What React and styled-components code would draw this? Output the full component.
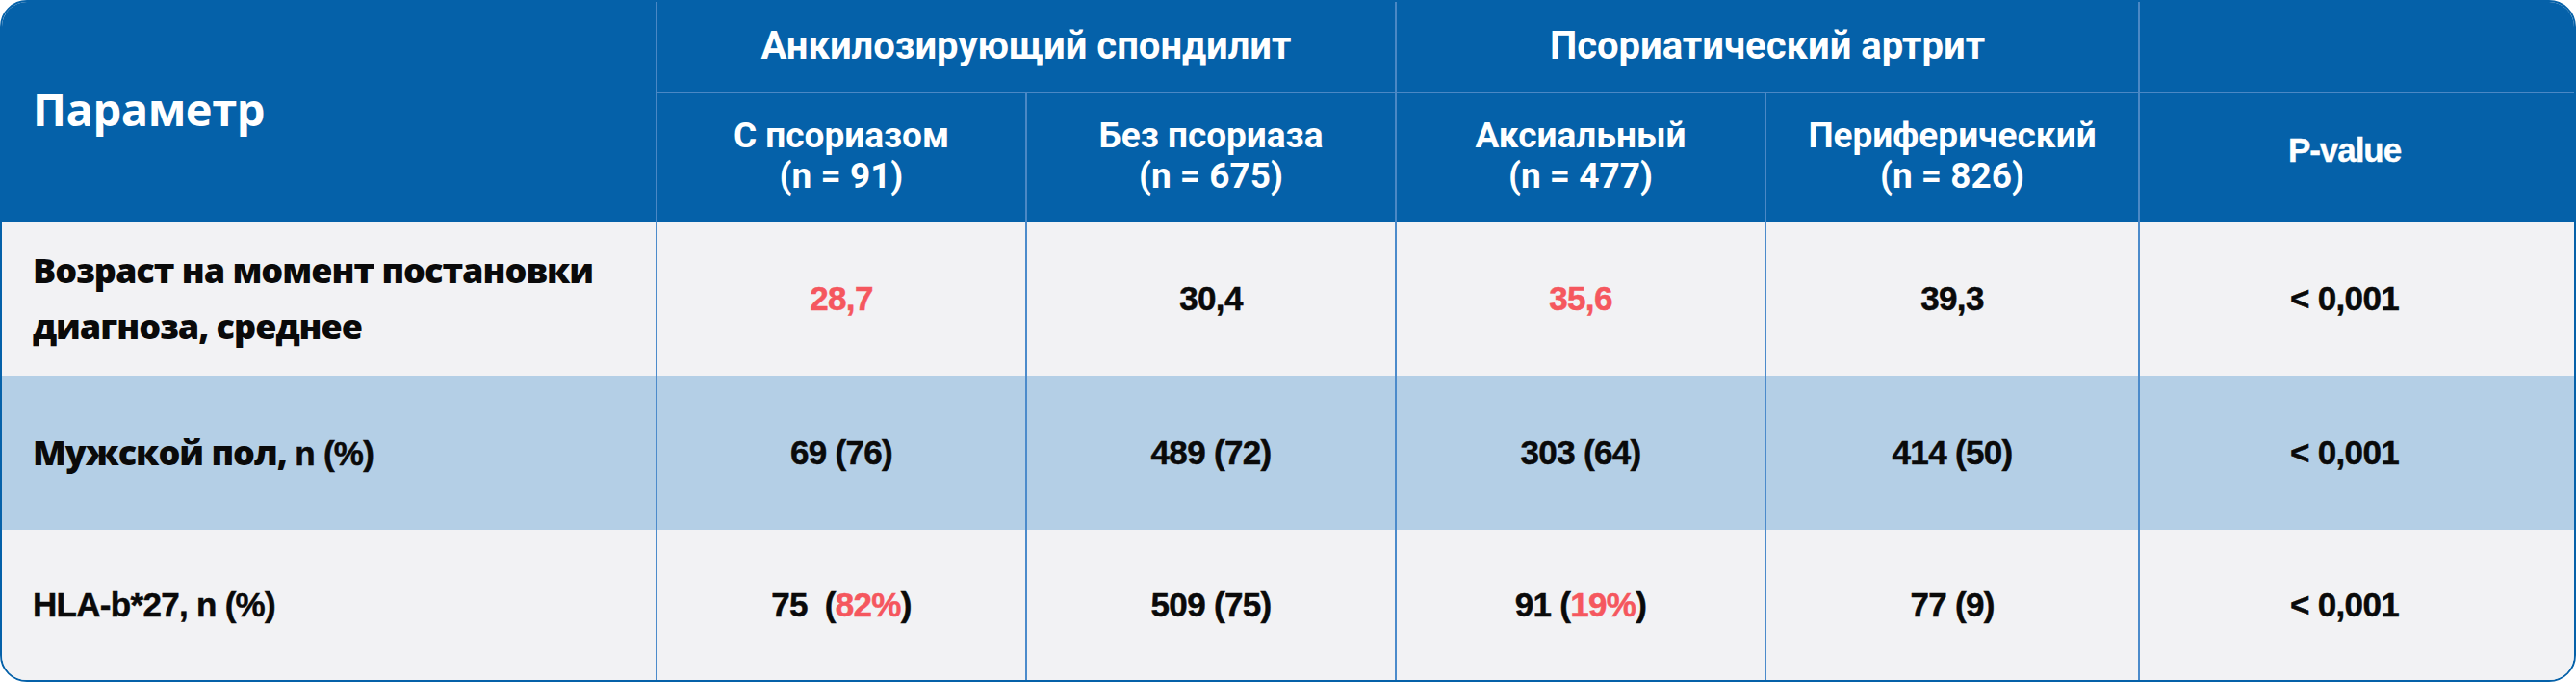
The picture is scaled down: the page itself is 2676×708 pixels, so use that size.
import React from "react";
import styled, { createGlobalStyle } from "styled-components";

const Global = createGlobalStyle`
  html, body {
    margin: 0;
    padding: 0;
    background: #ffffff;
  }
  * {
    box-sizing: border-box;
  }
`;

const BLUE = "#0561a9";
const HEAD_LINE = "#4b88c5";
const BODY_LINE = "#4c8bcb";
const RED = "#f5575e";

const Table = styled.div`
  width: 2676px;
  height: 708px;
  display: grid;
  grid-template-columns: 679px 384px 384px 384px 388px 1fr;
  grid-template-rows: 95px 133px 160px 160px 1fr;
  border: 2px solid ${BLUE};
  border-radius: 28px;
  overflow: hidden;
  background: #f2f2f4;
`;

const HeadCell = styled.div`
  background: ${BLUE};
  color: #ffffff;
  display: flex;
  align-items: center;
  justify-content: center;
  text-align: center;
  font-family: Roboto, "Liberation Sans", sans-serif;
  font-weight: 700;
  grid-column: ${(p) => p.$col || "auto"};
  grid-row: ${(p) => p.$row || "auto"};
  border-left: ${(p) => (p.$first ? "none" : `2px solid ${HEAD_LINE}`)};
  border-bottom: ${(p) => (p.$divider ? `2px solid ${HEAD_LINE}` : "none")};
  padding-right: ${(p) => (p.$last ? "26px" : "0")};
`;

const ParamTitle = styled(HeadCell)`
  justify-content: flex-start;
  padding-left: 32px;
  padding-bottom: 6px;
  font-family: "Open Sans", "Noto Sans", sans-serif;
  font-size: 47px;
  letter-spacing: -0.01em;
`;

const GroupTitle = styled.span`
  font-size: 40px;
  line-height: 48px;
  padding-bottom: 2px;
`;

const SubTitle = styled.span`
  font-size: 37px;
  line-height: 42px;
  padding-bottom: 4px;
`;

const PValueTitle = styled.span`
  font-family: "Liberation Sans", Arial, sans-serif;
  font-size: 35px;
  letter-spacing: -0.03em;
  padding-bottom: 16px;
  -webkit-text-stroke: 0.4px currentColor;
`;

const Cell = styled.div`
  background: ${(p) => (p.$alt ? "#b4cfe6" : "#f2f2f4")};
  color: #0a0a0a;
  display: flex;
  align-items: center;
  justify-content: center;
  text-align: center;
  font-family: "Liberation Sans", Arial, sans-serif;
  font-weight: 700;
  font-size: 35px;
  letter-spacing: -0.02em;
  white-space: pre;
  -webkit-text-stroke: 0.5px currentColor;
  border-left: 2px solid ${BODY_LINE};
  padding-right: ${(p) => (p.$last ? "26px" : "0")};
`;

const LabelCell = styled(Cell)`
  border-left: none;
  justify-content: flex-start;
  text-align: left;
  padding-left: 32px;
  white-space: normal;
`;

const Label = styled.span`
  font-family: "Open Sans", "Noto Sans", sans-serif;
  font-weight: 800;
  font-size: 36px;
  line-height: 58px;
  letter-spacing: -0.028em;
  -webkit-text-stroke: 0;
`;

const Latin = styled.span`
  font-family: "Liberation Sans", Arial, sans-serif;
  font-weight: 700;
  font-size: 35px;
  letter-spacing: -0.02em;
  -webkit-text-stroke: 0.5px currentColor;
`;

const Red = styled.span`
  color: ${RED};
`;

const rows = [
  {
    label: <Label>Возраст на момент постановки<br />диагноза, среднее</Label>,
    values: [<Red>28,7</Red>, "30,4", <Red>35,6</Red>, "39,3", "< 0,001"],
  },
  {
    alt: true,
    label: (
      <Label>
        Мужской пол, <Latin>n (%)</Latin>
      </Label>
    ),
    values: ["69 (76)", "489 (72)", "303 (64)", "414 (50)", "< 0,001"],
  },
  {
    label: <Latin>HLA-b*27, n (%)</Latin>,
    values: [
      <>75  (<Red>82%</Red>)</>,
      "509 (75)",
      <>91 (<Red>19%</Red>)</>,
      "77 (9)",
      "< 0,001",
    ],
  },
];

const subGroups = [
  ["С псориазом", "(n = 91)"],
  ["Без псориаза", "(n = 675)"],
  ["Аксиальный", "(n = 477)"],
  ["Периферический", "(n = 826)"],
];

export default function App() {
  return (
    <>
      <Global />
      <Table>
        <ParamTitle $first $col="1" $row="1 / 3">
          Параметр
        </ParamTitle>
        <HeadCell $col="2 / 4" $row="1" $divider>
          <GroupTitle>Анкилозирующий спондилит</GroupTitle>
        </HeadCell>
        <HeadCell $col="4 / 6" $row="1" $divider>
          <GroupTitle>Псориатический артрит</GroupTitle>
        </HeadCell>
        <HeadCell $col="6" $row="1" $divider />
        {subGroups.map(([name, n], i) => (
          <HeadCell key={name} $col={`${i + 2}`} $row="2">
            <SubTitle>
              {name}
              <br />
              {n}
            </SubTitle>
          </HeadCell>
        ))}
        <HeadCell $col="6" $row="2" $last>
          <PValueTitle>P-value</PValueTitle>
        </HeadCell>

        {rows.map((row, r) => (
          <React.Fragment key={r}>
            <LabelCell $alt={row.alt}>{row.label}</LabelCell>
            {row.values.map((v, i) => (
              <Cell key={i} $alt={row.alt} $last={i === row.values.length - 1}>
                {v}
              </Cell>
            ))}
          </React.Fragment>
        ))}
      </Table>
    </>
  );
}
